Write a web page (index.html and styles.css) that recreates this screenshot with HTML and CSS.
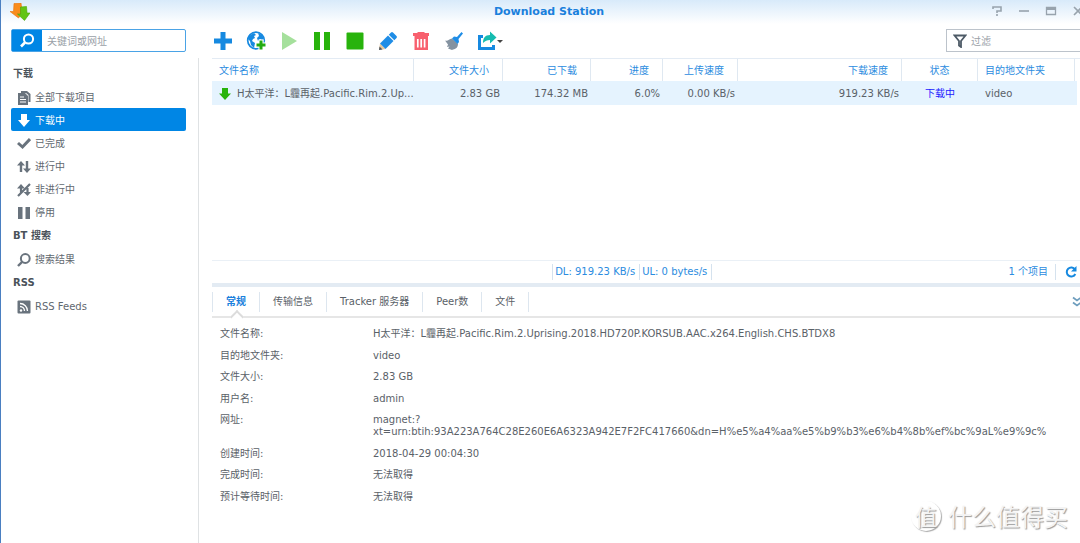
FILE: index.html
```html
<!DOCTYPE html>
<html lang="zh-CN">
<head>
<meta charset="utf-8">
<title>Download Station</title>
<link rel="stylesheet" href="styles.css">
</head>
<body>
<div class="window">
  <header class="titlebar">
    <svg class="logo" viewBox="0 0 20 18" width="20" height="18" aria-hidden="true">
      <path d="M4 .5l7-.5 1 7h3L8.500 15 0 8.500h3.500z" fill="#f98c1c" stroke="#e8740c" stroke-width=".6"/>
      <path d="M10.500 4l6-.5.5 6.500h3l-5.500 7.500L7.500 11h3z" fill="#62c414" stroke="#46a508" stroke-width=".6"/>
    </svg>
    <h1 class="title">Download Station</h1>
    <div class="window-controls">
      <button class="ctl" type="button" aria-label="帮助"><svg viewBox="0 0 12 12" width="12" height="12"><path d="M2 4V2h8v4H6v2M6 9v2" fill="none" stroke="#98a3ad" stroke-width="1.600"/></svg></button>
      <button class="ctl" type="button" aria-label="最小化"><svg viewBox="0 0 12 12" width="12" height="12"><path d="M1 6h10" stroke="#98a3ad" stroke-width="1.600"/></svg></button>
      <button class="ctl" type="button" aria-label="最大化"><svg viewBox="0 0 12 12" width="12" height="12"><path d="M1.500 2.500h9v7h-9z" fill="none" stroke="#98a3ad" stroke-width="1.300"/><path d="M1 2h10v3H1z" fill="#98a3ad"/></svg></button>
      <button class="ctl" type="button" aria-label="关闭"><svg viewBox="0 0 12 12" width="12" height="12"><path d="M2 2l8 8M10 2l-8 8" stroke="#98a3ad" stroke-width="1.600"/></svg></button>
    </div>
  </header>

  <div class="body">
    <aside class="side">
      <form class="search">
        <button class="search-btn" type="button" aria-label="搜索"><svg viewBox="0 0 16 16" width="16" height="16"><circle cx="9.500" cy="6" r="4.600" fill="none" stroke="#fff" stroke-width="2"/><path d="M6 9.500L2 13.500" stroke="#fff" stroke-width="2.600"/></svg></button>
        <input class="search-input" type="text" placeholder="关键词或网址" aria-label="关键词或网址">
      </form>
      <nav class="nav">
        <h2 class="nav-head">下载</h2>
        <a class="nav-item" href="#all"><svg viewBox="0 0 14 14" width="14" height="14"><path d="M4 0h6l3.500 3v8h-2V4L9 2H4z" fill="#69737d"/><path d="M1 2h7l3 3v9H1z" fill="#69737d"/><path d="M3 6h4M3 8.500h6M3 11h6" stroke="#fff"/></svg>全部下载项目</a>
        <a class="nav-item active" href="#downloading"><svg viewBox="0 0 14 14" width="14" height="14"><path d="M4 0h6v6h3l-6 7-6-7h3z" fill="#fff"/></svg>下载中</a>
        <a class="nav-item" href="#done"><svg viewBox="0 0 14 14" width="14" height="14"><path d="M1 6l4.500 4L13 2" fill="none" stroke="#69737d" stroke-width="3"/></svg>已完成</a>
        <a class="nav-item" href="#running"><svg viewBox="0 0 14 14" width="14" height="14"><path d="M4 12V4M10 1v9" stroke="#69737d" stroke-width="2.400"/><path d="M0 5.500L4 1l4 4.500zM6 8.500h8L10 13z" fill="#69737d"/></svg>进行中</a>
        <a class="nav-item" href="#inactive"><svg viewBox="0 0 14 14" width="14" height="14"><path d="M4 10V4M10.500 5v5M1 13L13 1" stroke="#69737d" stroke-width="2.200"/><path d="M0 5.500L4 1l4 4.500zM6.500 9H14l-3.500 4z" fill="#69737d"/></svg>非进行中</a>
        <a class="nav-item" href="#stopped"><svg viewBox="0 0 14 14" width="14" height="14"><path d="M1 1h4.500v12H1zM8.500 1H13v12H8.500z" fill="#69737d"/></svg>停用</a>
        <h2 class="nav-head">BT 搜索</h2>
        <a class="nav-item" href="#results"><svg viewBox="0 0 14 14" width="14" height="14"><circle cx="8.300" cy="5.500" r="4.400" fill="none" stroke="#69737d" stroke-width="2"/><path d="M5 9l-4 4" stroke="#69737d" stroke-width="2.400"/></svg>搜索结果</a>
        <h2 class="nav-head">RSS</h2>
        <a class="nav-item" href="#rss"><svg viewBox="0 0 14 14" width="14" height="14"><rect x=".5" y=".5" width="13" height="13" rx="1" fill="#69737d"/><circle cx="4" cy="10.500" r="1.200" fill="#fff"/><path d="M3 6.500a4.500 4.500 0 0 1 4.500 4.500M3 3.500a7.500 7.500 0 0 1 7.500 7.500" fill="none" stroke="#fff" stroke-width="1.300"/></svg>RSS Feeds</a>
      </nav>
    </aside>

    <main class="main">
      <div class="toolbar">
        <div class="tools">
          <button class="tool" type="button" aria-label="新增"><svg viewBox="0 0 20 20" width="20" height="20"><path d="M7.500 1h5v6.500H19v5h-6.500V19h-5v-6.500H1v-5h6.500z" fill="#1689e0"/></svg></button>
          <button class="tool" type="button" aria-label="输入网址"><svg viewBox="0 0 20 20" width="20" height="20"><circle cx="10" cy="9.500" r="8.300" fill="#fff" stroke="#1689e0" stroke-width="1.700"/><path d="M3 5l5-3 2 2-2 1 1 2-2 1-1 2 3 2-1 5-3-3-1-4-2-2zM12 2l4 2 2 4-2 1-2-1-2 2-1-3 2-2z" fill="#1689e0"/><path d="M15 8.500V20M9.500 14H20" stroke="#fff" stroke-width="5"/><path d="M15 9.500v9M10.500 14h9" stroke="#22ab12" stroke-width="3"/></svg></button>
          <button class="tool" type="button" aria-label="继续" disabled><svg viewBox="0 0 20 20" width="20" height="20"><path d="M3 1l15 9-15 9z" fill="#a5e09c"/></svg></button>
          <button class="tool" type="button" aria-label="暂停"><svg viewBox="0 0 20 20" width="20" height="20"><path d="M2 1h6v18H2zM12 1h6v18h-6z" fill="#28b30c"/></svg></button>
          <button class="tool" type="button" aria-label="停止"><svg viewBox="0 0 20 20" width="20" height="20"><rect x="1.500" y="1.500" width="17" height="17" rx="1" fill="#28b30c"/></svg></button>
          <button class="tool" type="button" aria-label="编辑"><svg viewBox="0 0 20 20" width="20" height="20"><path d="M1 19l1-6.500L7.500 18z" fill="#e8c79b"/><path d="M1 19l.5-3.500L4.500 18.500z" fill="#4b5560"/><path d="M2 12.500L10 4.500l5.500 5.500-8 8z" fill="#1f8de6"/><path d="M10.800 3.700l2.200-2.200q1-1 2 0l3.500 3.500q1 1 0 2l-2.200 2.200z" fill="#1f8de6"/></svg></button>
          <button class="tool" type="button" aria-label="删除"><svg viewBox="0 0 20 20" width="20" height="20"><path d="M6.500 2V1h7v1H18v3H2V2z" fill="#f8606e"/><path d="M3.500 5h13.500v14H3.500z" fill="#f8606e"/><path d="M6.800 8v8.500M10.200 8v8.500M13.600 8v8.500" stroke="#fff" stroke-width="1.700"/></svg></button>
          <button class="tool" type="button" aria-label="清除"><svg viewBox="0 0 20 20" width="20" height="20"><path d="M1 9.500c3 1 4-1.500 7-2l6 5.500c0 4-3 5-6 6l-4-1.500 1.500-2-2.500.5 1-2.500z" fill="#8492a0"/><path d="M8 7.500l2-2 3 .5 4.500-5L19 2.500 14.500 8l.5 3-1.500 2z" fill="#1f8de6"/></svg></button>
          <button class="tool" type="button" aria-label="分享"><svg viewBox="0 0 20 20" width="20" height="20"><path d="M6 5.500H2.500v12h14V14" fill="none" stroke="#1689e0" stroke-width="3"/><path d="M6 12c0-5 2-8 7-8V.5l6.500 6-6.500 6V9c-3 0-5 1-7 3z" fill="#16bcb0"/></svg><span class="caret"></span></button>
        </div>
        <label class="filter"><svg viewBox="0 0 14 14" width="14" height="14" aria-hidden="true"><path d="M1.500 1.500h11L8 7v6l-2-1.500V7z" fill="none" stroke="#4d5a66" stroke-width="1.800"/></svg><input class="filter-input" type="text" placeholder="过滤" aria-label="过滤"></label>
      </div>

      <div class="list">
        <table class="grid">
          <colgroup><col class="c-name"><col class="c-size"><col class="c-done"><col class="c-prog"><col class="c-up"><col class="c-down"><col class="c-status"><col class="c-dest"><col></colgroup>
          <thead><tr><th class="left">文件名称</th><th>文件大小</th><th>已下载</th><th>进度</th><th>上传速度</th><th>下载速度</th><th class="center">状态</th><th class="left">目的地文件夹</th><td class="blank"></td></tr></thead>
          <tbody><tr><td class="left name"><svg viewBox="0 0 14 14" width="12" height="14"><path d="M3.500 0h7v6.500h3.500l-7 7.500-7-7.500h3.500z" fill="#28b30c"/></svg>H太平洋<span class="wide-mark">：</span>L霾再起.Pacific.Rim.2.Up...</td><td>2.83 GB</td><td>174.32 MB</td><td>6.0%</td><td>0.00 KB/s</td><td>919.23 KB/s</td><td class="center state">下载中</td><td class="left">video</td><td></td></tr></tbody>
        </table>
      </div>

      <div class="status">
        <div class="rates"><span class="rate">DL: 919.23 KB/s</span><span class="rate">UL: 0 bytes/s</span></div>
        <span class="count">1 个项目</span>
        <button class="refresh" type="button" aria-label="刷新"><svg viewBox="0 0 12 12" width="12" height="12"><path d="M10 3.500A4.500 4.500 0 1 0 10.300 8" fill="none" stroke="#1689e0" stroke-width="2"/><path d="M11.500 0v5.500H6z" fill="#1689e0"/></svg></button>
      </div>

      <section class="detail">
        <div class="tabs" role="tablist">
          <button class="tab selected" type="button" role="tab">常规</button>
          <button class="tab" type="button" role="tab">传输信息</button>
          <button class="tab" type="button" role="tab">Tracker 服务器</button>
          <button class="tab" type="button" role="tab">Peer数</button>
          <button class="tab" type="button" role="tab">文件</button>
          <button class="collapse" type="button" aria-label="收起"><svg viewBox="0 0 10 12" width="10" height="12"><path d="M1 1.500l4 3 4-3M1 6.500l4 3 4-3" fill="none" stroke="#6d9dbd" stroke-width="1.700"/></svg></button>
        </div>
        <dl class="props">
          <div class="prop"><dt>文件名称:</dt><dd>H太平洋<span class="wide-mark">：</span>L霾再起.Pacific.Rim.2.Uprising.2018.HD720P.KORSUB.AAC.x264.English.CHS.BTDX8</dd></div>
          <div class="prop"><dt>目的地文件夹:</dt><dd>video</dd></div>
          <div class="prop"><dt>文件大小:</dt><dd>2.83 GB</dd></div>
          <div class="prop"><dt>用户名:</dt><dd>admin</dd></div>
          <div class="prop"><dt>网址:</dt><dd>magnet:?<br>xt=urn:btih:93A223A764C28E260E6A6323A942E7F2FC417660&amp;dn=H%e5%a4%aa%e5%b9%b3%e6%b4%8b%ef%bc%9aL%e9%9c%</dd></div>
          <div class="prop"><dt>创建时间:</dt><dd>2018-04-29 00:04:30</dd></div>
          <div class="prop"><dt>完成时间:</dt><dd>无法取得</dd></div>
          <div class="prop"><dt>预计等待时间:</dt><dd>无法取得</dd></div>
        </dl>
      </section>
    </main>
  </div>
  <div class="watermark"><span class="seal">值</span><span>什么值得买</span></div>
</div>
</body>
</html>
```
FILE: styles.css
```css
* { box-sizing: border-box; }
body, h1, h2, dl, dd, form { margin: 0; }
body {
  background: #fff;
  color: #5a6168;
  font: 10px/12px "DejaVu Sans", "Noto Sans CJK SC", sans-serif;
  overflow: hidden;
}
button, input { font: inherit; color: inherit; border: 0; padding: 0; background: none; outline: 0; }
svg { display: block; flex: none; }
.window {
  position: relative;
  display: flex;
  flex-direction: column;
  min-height: 100vh;
  border-left: 1px solid #4a7fc1;
}
.titlebar {
  display: grid;
  grid-template-columns: 1fr auto 1fr;
  align-items: center;
  height: 24px;
  padding-left: 17px;
  background: linear-gradient(#d8eafa, #fff);
}
.logo { margin-left: -8px; }
.title { font-size: 11px; line-height: 22px; color: #1a80dc; }
.window-controls { display: flex; justify-content: flex-end; gap: 15px; margin: 0 -4px 2px 0; }
.ctl { width: 12px; height: 12px; }
.body { flex: 1; display: flex; }
.side { flex: none; width: 198px; padding-top: 5px; display: flex; flex-direction: column; }
.search {
  display: flex;
  height: 23px;
  margin: 0 13px 6px 10px;
  border: 1px solid #4aa3e6;
  border-radius: 2px;
}
.search-btn { width: 30px; display: flex; align-items: center; justify-content: center; background: #0086e5; }
.search-input { flex: 1; min-width: 0; padding: 2px 0 0 5px; }
::placeholder { color: #9aa1a8; opacity: 1; }
.nav { flex: 1; padding: 4px 12px 0 10px; border-right: 1px solid #dfe2e4; }
.nav-head { font-size: 10px; line-height: 23px; padding-left: 2px; color: #4a525a; }
.nav-item + .nav-head { padding-top: 1px; }
.nav-item {
  display: flex;
  align-items: center;
  gap: 4px;
  height: 23px;
  padding: 2px 0 0 6px;
  border-radius: 2px;
  color: #5f6870;
  text-decoration: none;
}
.nav-item.active { background: #0086e5; color: #fff; }
.main { flex: 1; min-width: 0; padding-left: 13px; display: flex; flex-direction: column; }
.toolbar { display: flex; justify-content: space-between; height: 34px; padding-top: 5px; }
.tools { display: flex; gap: 13px; padding: 2px 0 0 1px; }
.tool { display: flex; align-items: center; width: 20px; height: 20px; }
.caret { flex: none; border: 3px solid transparent; border-top-color: #444; border-bottom: 0; }
.filter {
  display: flex;
  align-items: center;
  gap: 4px;
  width: 134px;
  height: 23px;
  padding-left: 6px;
  border: 1px solid #bcc3cb;
  border-right: 0;
}
.filter-input { flex: 1; min-width: 0; padding-top: 2px; }
.list { height: 202px; border-top: 1px solid #e3ebf4; padding-right: 3px; }
.grid { width: 100%; table-layout: fixed; border-collapse: separate; border-spacing: 0; }
.c-name { width: 202px; }
.c-size { width: 89px; }
.c-done { width: 88px; }
.c-prog { width: 72px; }
.c-up { width: 75px; }
.c-down { width: 164px; }
.c-status { width: 76px; }
.c-dest { width: 97px; }
.grid th {
  height: 22px;
  padding: 2px 13px 0 0;
  border-right: 1px solid #dfe8f1;
  font-weight: normal;
  text-align: right;
  color: #2b8ce0;
}
.grid td { height: 24px; padding: 2px 3px 0 0; text-align: right; white-space: nowrap; background: #e5f3fe; }
.grid .blank { height: 22px; background: none; }
.grid .left { text-align: left; padding-left: 7px; padding-right: 0; }
.grid .center { text-align: center; padding-right: 0; }
.grid .state { color: #1a1aff; }
.name svg { display: inline-block; vertical-align: middle; margin-right: 6px; }
.wide-mark { font-family: "Noto Sans CJK TC", sans-serif; line-height: 1; }
.status {
  display: flex;
  align-items: center;
  height: 23px;
  border-top: 1px solid #eaf0f6;
  color: #2b8ce0;
}
.rates { flex: 1; display: flex; justify-content: center; padding-left: 51px; }
.rate { padding: 2px 4px 2px 2px; border-right: 1px solid #d5e2ee; }
.rate:first-child { border-left: 1px solid #d5e2ee; }
.count { padding: 2px 7px; border-right: 1px solid #d5e2ee; }
.refresh { width: 24px; padding-left: 9px; }
.detail { border-top: 4px solid #e3ebf3; }
.tabs {
  display: flex;
  align-items: center;
  height: 31px;
  border-bottom: 2px solid #e6e6e6;
}
.tab { position: relative; height: 20px; padding: 0 13px; border-right: 1px solid #dde6ef; }
.tab:first-child { border-left: 1px solid #dde6ef; }
.tab.selected { color: #1a80dc; font-weight: bold; }
.tab.selected::after {
  content: "";
  position: absolute;
  left: 50%;
  bottom: -10px;
  width: 8px;
  height: 8px;
  margin-left: -4px;
  background: #fff;
  border: solid #dcdcdc;
  border-width: 2px 0 0 2px;
  transform: rotate(45deg);
}
.collapse { width: 8px; margin-left: auto; overflow: hidden; }
.props { display: grid; gap: 9px; padding: 10px 0 0 8px; }
.prop { display: grid; grid-template-columns: 153px 1fr; white-space: nowrap; }
.prop:nth-child(odd) { padding-bottom: 1px; }
.watermark {
  position: absolute;
  right: 12px;
  bottom: 12px;
  display: flex;
  align-items: center;
  gap: 7px;
  color: #f4f4f4;
  font: 24px/30px "Noto Sans CJK SC", sans-serif;
  text-shadow: 1px 1px 1px #999;
}
.seal {
  width: 30px;
  height: 30px;
  border-radius: 50%;
  text-align: center;
  font-size: 22px;
  line-height: 28px;
  box-shadow: 1px 1px 1px #aaa;
}
```
